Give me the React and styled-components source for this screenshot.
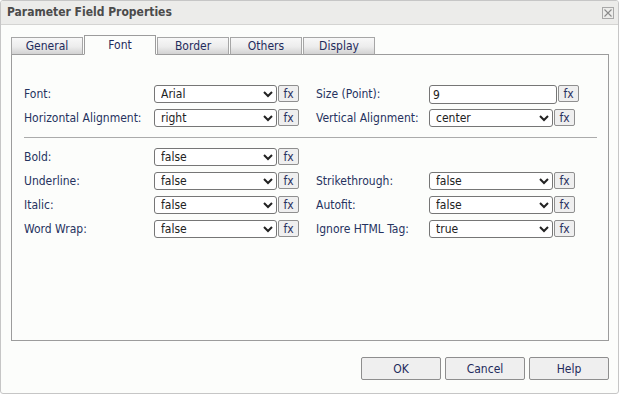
import React from "react";
import styled, { createGlobalStyle } from "styled-components";

const FONT = `"DejaVu Sans Condensed", "DejaVu Sans", sans-serif`;

const GlobalStyle = createGlobalStyle`
  html, body { margin: 0; padding: 0; background: #ffffff; }
  body { font-family: ${FONT}; font-size: 12px; }
  * { box-sizing: border-box; }
`;

const Dialog = styled.div`
  width: 619px;
  height: 394px;
  border: 1px solid #c6c6c6;
  border-radius: 3px;
  background: #fcfdfb;
  display: flex;
  flex-direction: column;
  overflow: hidden;
`;

const TitleBar = styled.div`
  height: 24px;
  flex: none;
  background: #ececea;
  border-bottom: 1px solid #d4d4d2;
  display: flex;
  align-items: center;
  justify-content: space-between;
  padding: 0 4px 1px 6px;
`;

const Title = styled.div`
  font-family: ${FONT};
  font-weight: bold;
  font-size: 12px;
  color: #4b4b4b;
`;

const CloseBox = styled.div`
  width: 12px;
  height: 12px;
  border: 1px solid #a8a8a8;
  display: flex;
  align-items: center;
  justify-content: center;
  margin-top: 1px;
`;

const Body = styled.div`
  padding: 10px 9px 0 10px;
  display: flex;
  flex-direction: column;
`;

const TabBar = styled.div`
  display: flex;
  align-items: flex-end;
  gap: 1px;
  height: 20px;
  margin-bottom: -1px;
  position: relative;
  z-index: 1;
`;

const Tab = styled.div`
  width: 72px;
  height: ${(p) => (p.$active ? "20px" : "18px")};
  border: 1px solid ${(p) => (p.$active ? "#9c9c9c" : "#a6a6a6")};
  border-bottom-color: ${(p) => (p.$active ? "#fcfdfb" : "#9c9c9c")};
  background: ${(p) =>
    p.$active
      ? "#fcfdfb"
      : "linear-gradient(#f8f8f8 0%, #ececec 55%, #d2d2d2 100%)"};
  color: #1f2b5c;
  font-family: ${FONT};
  font-size: 12px;
  display: flex;
  align-items: center;
  justify-content: center;
  padding-bottom: 1px;
`;

const Panel = styled.div`
  height: 287px;
  border: 1px solid #9c9c9c;
  background: #fcfdfb;
  padding: 27px 11px 0 12px;
`;

const Grid = styled.div`
  display: grid;
  grid-template-columns: 130px 162px 113px 1fr;
  grid-auto-rows: 24px;
  align-items: center;
`;

const Label = styled.div`
  font-family: ${FONT};
  font-size: 12px;
  color: #26335f;
  white-space: nowrap;
`;

const Field = styled.div`
  display: flex;
  align-items: flex-start;
  gap: 1px;
  height: 18px;
`;

const Select = styled.select`
  width: ${(p) => p.$w || 123}px;
  height: 18px;
  font-family: ${FONT};
  font-size: 12px;
  color: #222;
  border: 1px solid #767676;
  border-radius: 3px;
  background-color: #ffffff;
  padding: 0 0 0 2px;
  margin: 0;
`;

const TextInput = styled.input`
  width: 128px;
  height: 19px;
  font-family: ${FONT};
  font-size: 12px;
  color: #222;
  border: 1px solid #767676;
  border-radius: 3px;
  background: #ffffff;
  padding: 0 0 0 3px;
  margin: 0;
`;

const FxButton = styled.button`
  width: 21px;
  height: 17px;
  padding: 0;
  margin: 0;
  border: 1px solid #8f8f8f;
  border-radius: 2px;
  background: #efefef;
  color: #2a3060;
  font-family: ${FONT};
  font-size: 12px;
  line-height: 14px;
`;

const Separator = styled.div`
  height: 1px;
  background: #ababab;
  margin: 7px 0;
`;

const Footer = styled.div`
  display: flex;
  justify-content: flex-end;
  gap: 4px;
  padding-top: 16px;
`;

const Button = styled.button`
  width: 80px;
  height: 23px;
  border: 1px solid #8e8e8e;
  border-radius: 2px;
  background: #efefef;
  color: #1f2b5c;
  font-family: ${FONT};
  font-size: 12px;
  padding: 0;
`;

const Empty = styled.div``;

function SelectField({ value, w }) {
  return (
    <Field>
      <Select $w={w} defaultValue={value}>
        <option value={value}>{value}</option>
      </Select>
      <FxButton>fx</FxButton>
    </Field>
  );
}

export default function App() {
  return (
    <>
      <GlobalStyle />
      <Dialog>
        <TitleBar>
          <Title>Parameter Field Properties</Title>
          <CloseBox>
            <svg width="8" height="8" viewBox="0 0 8 8">
              <path d="M0.5 0.5 L7.5 7.5 M7.5 0.5 L0.5 7.5" stroke="#8a8a8a" strokeWidth="1.1" />
            </svg>
          </CloseBox>
        </TitleBar>
        <Body>
          <TabBar>
            <Tab>General</Tab>
            <Tab $active>Font</Tab>
            <Tab>Border</Tab>
            <Tab>Others</Tab>
            <Tab>Display</Tab>
          </TabBar>
          <Panel>
            <Grid>
              <Label>Font:</Label>
              <SelectField value="Arial" />
              <Label>Size (Point):</Label>
              <Field>
                <TextInput defaultValue="9" />
                <FxButton>fx</FxButton>
              </Field>
              <Label>Horizontal Alignment:</Label>
              <SelectField value="right" />
              <Label>Vertical Alignment:</Label>
              <SelectField value="center" w={124} />
            </Grid>
            <Separator />
            <Grid>
              <Label>Bold:</Label>
              <SelectField value="false" />
              <Empty />
              <Empty />
              <Label>Underline:</Label>
              <SelectField value="false" />
              <Label>Strikethrough:</Label>
              <SelectField value="false" w={124} />
              <Label>Italic:</Label>
              <SelectField value="false" />
              <Label>Autofit:</Label>
              <SelectField value="false" w={124} />
              <Label>Word Wrap:</Label>
              <SelectField value="false" />
              <Label>Ignore HTML Tag:</Label>
              <SelectField value="true" w={124} />
            </Grid>
          </Panel>
          <Footer>
            <Button>OK</Button>
            <Button>Cancel</Button>
            <Button>Help</Button>
          </Footer>
        </Body>
      </Dialog>
    </>
  );
}
